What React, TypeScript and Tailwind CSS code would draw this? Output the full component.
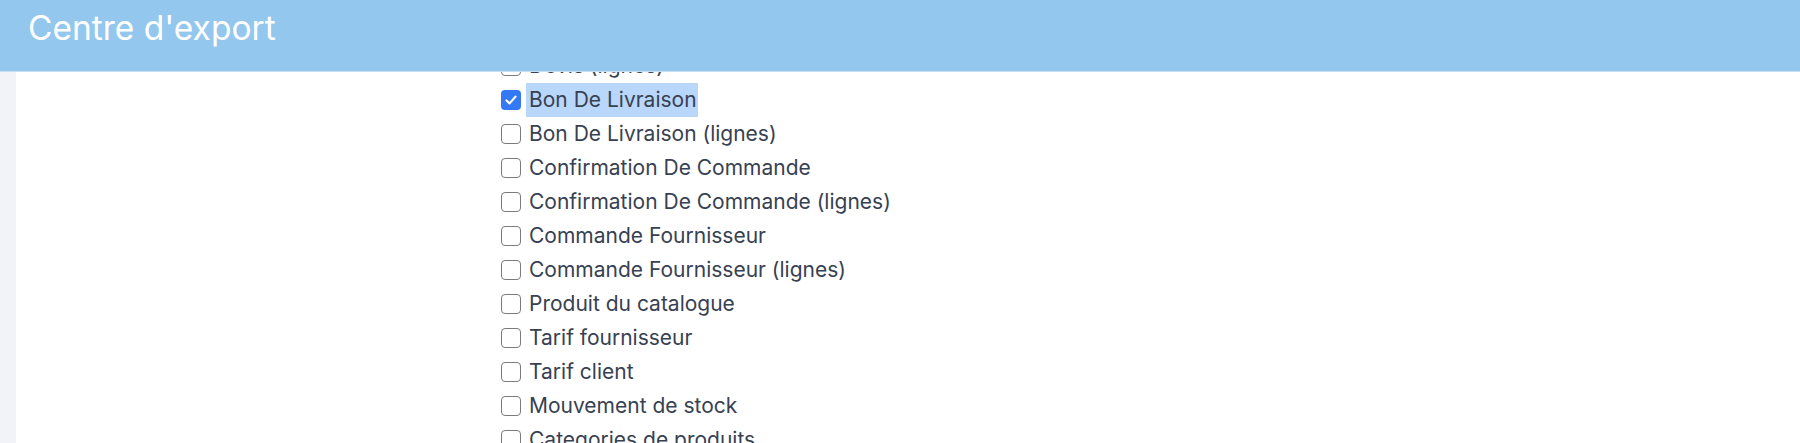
import React from 'react';

const exports = [
  { label: 'Devis (lignes)', checked: false },
  { label: 'Bon De Livraison', checked: true },
  { label: 'Bon De Livraison (lignes)', checked: false },
  { label: 'Confirmation De Commande', checked: false },
  { label: 'Confirmation De Commande (lignes)', checked: false },
  { label: 'Commande Fournisseur', checked: false },
  { label: 'Commande Fournisseur (lignes)', checked: false },
  { label: 'Produit du catalogue', checked: false },
  { label: 'Tarif fournisseur', checked: false },
  { label: 'Tarif client', checked: false },
  { label: 'Mouvement de stock', checked: false },
  { label: 'Categories de produits', checked: false },
];

function Checkbox({ checked }: { checked: boolean }) {
  if (checked) {
    return (
      <span className="flex h-[20px] w-[20px] shrink-0 items-center justify-center rounded-[4px] bg-[#3478f6]">
        <svg width="14" height="14" viewBox="0 0 14 14" fill="none">
          <path d="M2.5 7.5 L5.6 10.4 L11.5 3.6" stroke="white" strokeWidth="2.2" strokeLinecap="round" strokeLinejoin="round" />
        </svg>
      </span>
    );
  }
  return <span className="block h-[20px] w-[20px] shrink-0 rounded-[4px] border-[1.5px] border-[#7b7b7b] bg-white" />;
}

export default function App() {
  return (
    <div className="relative h-[443px] w-full overflow-hidden bg-white" style={{ fontFamily: 'Inter, "Noto Sans", sans-serif' }}>
      <div className="flex h-full">
        <div className="w-[16px] shrink-0 bg-[#f1f3f8]" />
        <div className="flex-1 pl-[485px] pt-[49px]">
          {exports.map((item) => (
            <label key={item.label} className="flex h-[34px] items-center text-[21px] leading-[34px] text-[#374151]">
              <Checkbox checked={item.checked} />
              <span className={`ml-[5px] pl-[3px] pr-[1px] ${item.checked ? 'bg-[#b9d6fb]' : ''}`}>{item.label}</span>
            </label>
          ))}
        </div>
      </div>

      {/* fixed header over the scrolled list */}
      <div className="absolute left-0 right-0 top-0 h-[72px] border-b border-[#c4e0f5] bg-[#93c7ed] px-[28px] pt-[8px]">
        <h1 className="text-[33.5px] font-normal leading-[40px] text-white">Centre d'export</h1>
      </div>
    </div>
  );
}
